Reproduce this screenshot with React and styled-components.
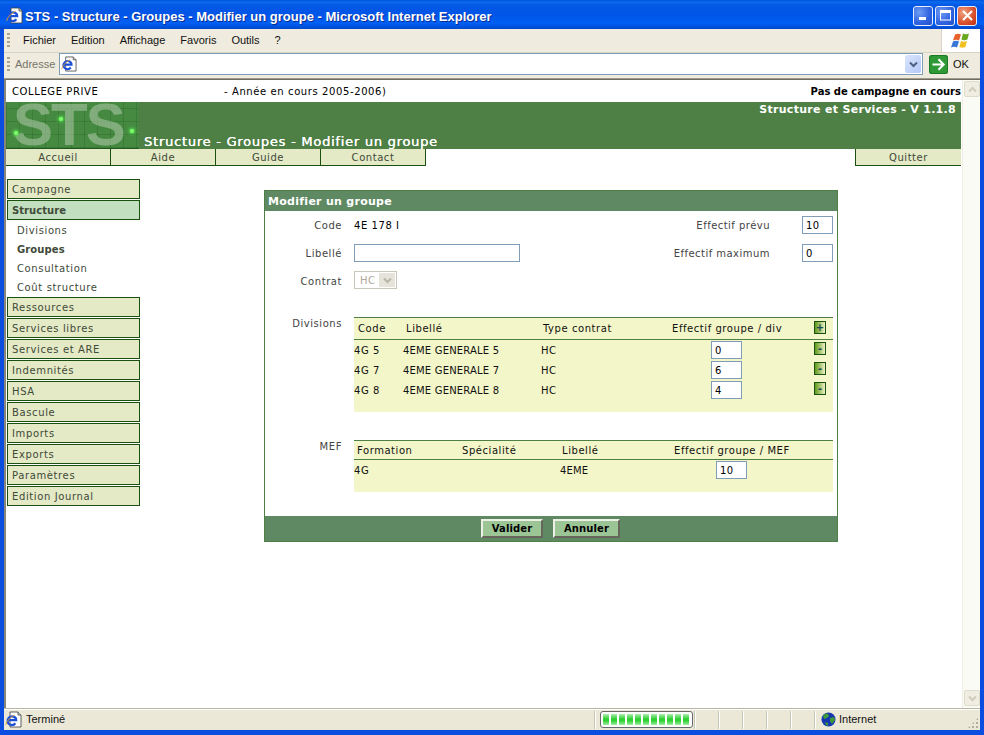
import React from "react";
import styled, { createGlobalStyle } from "styled-components";

const Global = createGlobalStyle`
  html, body { margin: 0; padding: 0; background: #0a4fe0; overflow: hidden; }
  * { box-sizing: border-box; }
`;
const page = `"DejaVu Sans", Verdana, sans-serif`;
const ui = `"Liberation Sans", "Noto Sans", sans-serif`;

const Win = styled.div`width: 984px; height: 735px; display: flex; flex-direction: column; background: #0a4ddf; overflow: hidden;`;
const TitleBar = styled.header`
  height: 29px; flex: none; display: flex; align-items: center; padding: 2px 7px 0 6px;
  background: linear-gradient(180deg, #0053d6 0, #0a6af0 2px, #0458e4 5px, #0055e8 50%, #0060f4 80%, #0048cc 100%);
`;
const TitleText = styled.span`
  flex: 1; margin: 1px 0 0 2px; font: bold 13px/1 ${ui}; letter-spacing: 0; color: #fff; text-shadow: 1px 1px 0 #0a2a90; white-space: nowrap;
`;
const Caption = styled.button`
  width: 20px; height: 20px; padding: 0; margin-left: 2px; border: 1px solid #e8eefc; border-radius: 3px; display: flex; align-items: center; justify-content: center;
  background: ${p => p.$close ? "radial-gradient(circle at 30% 30%, #f0a080, #d8502c 60%, #b83010)" : "radial-gradient(circle at 30% 30%, #6f9cf4, #2f62e0 60%, #2450c8)"};
`;
const Frame = styled.div`flex: 1; margin: 0 4px 5px; display: flex; flex-direction: column; min-height: 0; background: #ece9d8;`;
const MenuBar = styled.nav`
  height: 24px; flex: none; display: flex; align-items: center; background: #efebde; border-bottom: 1px solid #d8d4c4; padding: 0 0 1px 3px; position: relative;
`;
const Grip = styled.i`width: 3px; height: 15px; margin-right: 5px; flex: none; background: repeating-linear-gradient(180deg, #a8a490 0 2px, transparent 2px 4px);`;
const MenuItem = styled.span`font: 11px/1 ${ui}; color: #111; margin: 0 15px 0 ${p => p.$first ? 8 : 0}px; white-space: nowrap;`;
const FlagBox = styled.div`position: absolute; right: 0; top: 0; width: 39px; height: 23px; background: #fff; border-left: 1px solid #d8d4c4; display: flex; align-items: center; justify-content: center;`;
const AddressBar = styled.div`height: 26px; flex: none; display: flex; align-items: center; padding: 0 0 3px 3px; background: #efebde; border-bottom: 1px solid #a09c8c;`;
const AddrLabel = styled.span`font: 11px/1 ${ui}; color: #77756a; width: 44px; flex: none;`;
const AddrField = styled.div`width: 864px; height: 22px; flex: none; background: #fff; border: 1px solid #7f9db9; display: flex; align-items: center; justify-content: space-between; padding: 0 1px;`;
const Drop = styled.div`width: 16px; height: 18px; background: linear-gradient(135deg, #dbe6fd, #b4c8f6); border-radius: 2px; display: flex; align-items: center; justify-content: center;`;
const Go = styled.div`margin-left: 6px; display: flex; align-items: center; gap: 5px; font: 11px/1 ${ui}; color: #111;`;

const Viewport = styled.div`flex: 1; min-height: 0; display: flex; background: #fff; border-top: 1px solid #6e6c60; border-left: 2px solid #87857a;`;
const PageArea = styled.main`flex: 1; min-width: 0; font-family: ${page};`;
const Scrollbar = styled.div`width: 18px; flex: none; background: #fbfbf6; display: flex; flex-direction: column; justify-content: space-between; padding: 1px 0 2px; border-left: 1px solid #f1efe4;`;
const ScrollBtn = styled.div`width: 16px; height: 16px; margin-left: 1px; border: 1px solid #dedbcc; border-radius: 2px; background: #f0eee2; display: flex; align-items: center; justify-content: center;`;

const TopLine = styled.div`height: 22px; width: 955px; display: flex; align-items: center; font-size: 10px; letter-spacing: 0.6px; color: #000; padding-left: 6px;`;
const School = styled.span`width: 212px; flex: none;`;
const Status = styled.strong`margin-left: auto; letter-spacing: 0;`;
const Banner = styled.div`width: 955px; height: 47px; background: #4e7f44; display: flex; position: relative;`;
const Logo = styled.div`
  width: 133px; flex: none; position: relative; background-color: #468a41; border-bottom: 1px solid #1f5a22;
  background-image: repeating-linear-gradient(90deg, rgba(20,70,20,.2) 0 1px, transparent 1px 13px), repeating-linear-gradient(0deg, rgba(20,70,20,.2) 0 1px, transparent 1px 13px);
`;
const LogoText = styled.span`position: absolute; left: 7px; top: 1px; font: bold 60px/44px "Liberation Sans", sans-serif; letter-spacing: -2px; color: rgba(165,195,160,.62); white-space: nowrap;`;
const Spark = styled.i`position: absolute; width: 4px; height: 4px; border-radius: 50%; background: #7cff6a; box-shadow: 0 0 3px 1px #56e050; left: ${p => p.$x}px; top: ${p => p.$y}px;`;
const BannerTitle = styled.h1`margin: 0; align-self: flex-end; padding: 0 0 0 5px; font: 13px/15px ${page}; letter-spacing: 0.75px; color: #fff; white-space: nowrap; text-shadow: 0.3px 0 0 #fff;`;
const Version = styled.span`position: absolute; right: 5px; top: 1px; font: bold 11px/14px ${page}; letter-spacing: 0.3px; color: #fff;`;
const TabRow = styled.div`width: 955px; height: 17px; display: flex;`;
const Tab = styled.a`
  width: 105px; height: 17px; background: #e4e9c6; border-bottom: 1px solid #1a5010; ${p => p.$quit ? "border-left: 1px solid #1a5010; margin-left: auto; width: 106px;" : "border-right: 1px solid #1a5010;"}
  font-size: 10px; line-height: 17px; letter-spacing: 0.55px; color: #404a38; text-align: center;
`;
const Columns = styled.div`display: flex; align-items: flex-start;`;
const Side = styled.aside`width: 133px; margin: 13px 0 0 1px; flex: none; display: flex; flex-direction: column; gap: 1px;`;
const SideItem = styled.a`
  height: 20px; border: 1px solid #1a5010; background: ${p => p.$on ? "#c2e0c0" : "#e4e9c6"}; padding-left: 4px;
  font-size: 10px; line-height: 18px; padding-top: 1px; letter-spacing: 0.62px; color: #404a38; font-weight: ${p => p.$on ? 700 : 400}; ${p => p.$on && "letter-spacing: 0.05px;"}
`;
const SubList = styled.div`display: flex; flex-direction: column; padding-left: 10px; margin-bottom: -1px;`;
const SubItem = styled.a`
  height: 19px; font-size: 10px; line-height: 19px; letter-spacing: 0.62px; color: #404a38; font-weight: ${p => p.$on ? 700 : 400}; ${p => p.$on && "letter-spacing: 0.1px;"}
`;
const Panel = styled.section`width: 574px; margin: 24px 0 0 124px; flex: none; border: 1px solid #4e7f44; font-size: 10px; letter-spacing: 0.56px;`;
const PanelHead = styled.h2`margin: 0; height: 20px; padding-left: 3px; background: #5f8963; font: bold 11px/22px ${page}; letter-spacing: 0.28px; color: #fff;`;
const PanelBody = styled.div`padding: 5px 4px 24px 0; display: flex; flex-direction: column;`;
const Fields = styled.div`display: grid; grid-template-columns: 77px 166px 1fr 31px; column-gap: 12px; grid-auto-rows: 18px; row-gap: 10px; margin-bottom: 27px; align-items: center; color: #444;`;
const Label = styled.span`text-align: right; ${p => p.$far && "padding-right: 20px; letter-spacing: 0.47px;"} color: #444;`;
const Value = styled.span`color: #000;`;
const Box = styled.input`
  width: ${p => p.$w || 31}px; height: 18px; padding: 0 3px; border: 1px solid #7f9db9; background: #fff; font: 10px ${page}; letter-spacing: 0.5px; color: #000; outline: none; display: block; margin-left: ${p => p.$ml || 0}px;
`;
const Sel = styled.div`width: 43px; height: 18px; margin-top: -2px; border: 1px solid #c9c7ba; background: #fff; display: flex; align-items: center; justify-content: space-between; padding: 0 1px 0 5px; color: #aca899;`;
const SelBtn = styled.i`width: 16px; height: 14px; background: #e6e4da; display: flex; align-items: center; justify-content: center;`;
const Section = styled.div`display: grid; grid-template-columns: 77px 479px; column-gap: 12px; margin-bottom: ${p => p.$mb || 0}px;`;
const SecLabel = styled.span`text-align: right; color: #444; line-height: 12px; padding-top: 1px;`;
const Table = styled.div`background: #f3f6c8; border-top: 1px solid #4e7f44; color: #111; padding-bottom: ${p => p.$pb}px;`;
const Row = styled.div`
  display: grid; grid-template-columns: ${p => p.$cols}; align-items: center; height: ${p => p.$h}px;
`;
const HeadRow = styled(Row)`border-bottom: 1px solid #4e7f44;`;
const Cell = styled.span`padding-left: ${p => p.$pl || 0}px; white-space: nowrap; ${p => p.$tight && "letter-spacing: 0.18px;"}`;
const Spin = styled.span`
  align-self: start; margin-top: ${p => p.$mt}px;
  width: 12px; height: 13px; border: 1px solid #1a5010; background: linear-gradient(90deg, #5f9a1a, #eef0c8); display: flex; align-items: center; justify-content: center; font: bold 10px/1 ${page}; color: #1a4850; letter-spacing: 0;
`;
const PanelFoot = styled.footer`height: 25px; background: #5f8963; display: flex; justify-content: center; align-items: center; gap: 10px; padding-right: 1px;`;
const Btn = styled.button`
  width: ${p => p.$w}px; height: 19px; padding: 0; background: #9cc596; border: 2px solid; border-color: #eef0e8 #66665a #66665a #eef0e8; font: bold 10px ${page}; letter-spacing: 0.1px; color: #000;
`;
const StatusBar = styled.footer`height: 22px; flex: none; display: flex; align-items: center; background: #ebe8d8; border-top: 1px solid #b8b5a4; box-shadow: inset 0 1px 0 #fff; padding-left: 1px; position: relative; font: 11px/1 ${ui}; color: #111;`;
const StatText = styled.span`margin-left: 4px; width: 568px; flex: none;`;
const Sep = styled.i`width: 1px; height: 18px; background: #c8c5b4; box-shadow: 1px 0 0 #fff; margin-right: ${p => p.$mr ?? 23}px; flex: none;`;
const Progress = styled.div`width: 93px; height: 17px; margin: 0 1px 0 -1px; flex: none; border: 1px solid #686868; border-radius: 3px; background: #fff; padding: 2px; display: flex; gap: 2px;`;
const Bar = styled.i`width: 6px; flex: none; background: linear-gradient(180deg, #b0efb0, #2fd032 45%, #2fd032 60%, #a0eca0);`;
const ZoneText = styled.span`margin-left: 3px;`;
const Corner = styled.i`position: absolute; right: 1px; bottom: 1px; width: 12px; height: 12px; background: radial-gradient(circle, #b0ad9c 1px, transparent 1.4px) 0 0/4px 4px; clip-path: polygon(100% 0, 100% 100%, 0 100%);`;
const IconSvg = styled.svg`flex: none; margin-left: ${p => p.$ml || 0}px;`;

const IeIcon = ({ size = 17 }) => (
  <IconSvg width={size} height={size} viewBox="0 0 17 17">
    <path d="M5 1h8l3 3v12H5z" fill="#fff" stroke="#3a3a3a" strokeWidth="0.8" />
    <path d="M13 1v3h3" fill="#d8d8d8" stroke="#3a3a3a" strokeWidth="0.8" />
    <path d="M2.2 9.2h9c0-3.4-4.6-5.2-7.2-2.6-2.2 2.2-1.8 6 1 7 2 .8 4.2.1 5.4-1.4" fill="none" stroke="#1c50d8" strokeWidth="2.2" />
    <path d="M1 14c-.8-2 3.4-7.2 8.6-10" fill="none" stroke="#e0a030" strokeWidth="0.9" />
  </IconSvg>
);
const Chevron = ({ c = "#4d6185", s = 9 }) => (
  <svg width={s} height={s} viewBox="0 0 9 9"><path d="M1 2.5l3.5 3.5L8 2.5" fill="none" stroke={c} strokeWidth="2" /></svg>
);
const UpChevron = () => (
  <svg width="9" height="9" viewBox="0 0 9 9"><path d="M1 6.5L4.5 3 8 6.5" fill="none" stroke="#cfccbc" strokeWidth="2" /></svg>
);
const Flag = () => (
  <svg width="21" height="20" viewBox="0 0 21 20">
    <path d="M4 3.5c2-1 4-1 6 0l-2 6c-2-1-4-1-6 0z" fill="#e8622c" />
    <path d="M12 2.5c2 1 4 1 6 0l-1.6 6c-2 1-4 1-6 0z" fill="#6aa820" />
    <path d="M2 10.5c2-1 4-1 6 0l-2 6c-2-1-4-1-6 0z" fill="#3a78d8" />
    <path d="M10 10c2 1 4 1 6 0l-1.6 6c-2 1-4 1-6 0z" fill="#f0c020" />
  </svg>
);
const GoIcon = () => (
  <svg width="19" height="19" viewBox="0 0 19 19">
    <rect width="19" height="19" rx="2.5" fill="#2f9a35" />
    <rect x="0.5" y="0.5" width="18" height="18" rx="2.5" fill="none" stroke="#1d7a24" />
    <path d="M3.5 9.5h11M9.5 4.2l5.2 5.3-5.2 5.3" fill="none" stroke="#fff" strokeWidth="2" />
  </svg>
);
const Globe = () => (
  <IconSvg $ml={6} width="15" height="15" viewBox="0 0 15 15">
    <circle cx="7.5" cy="7.5" r="7" fill="#1636b0" />
    <path d="M4 2c2-1 4 0 4 2L6 6 3 7 2 4zM9 6l4-1 1 3-3 4-2-3zM4 10l3 1 0 3-2-1z" fill="#3f9a3a" />
  </IconSvg>
);

const menus = ["Fichier", "Edition", "Affichage", "Favoris", "Outils", "?"];
const tabs = ["Accueil", "Aide", "Guide", "Contact"];
const lower = ["Ressources", "Services libres", "Services et ARE", "Indemnités", "HSA", "Bascule", "Imports", "Exports", "Paramètres", "Edition Journal"];
const divCols = "49px 138px 129px 144px 19px";
const mefCols = "106px 100px 110px 163px";
const divisions = [["4G 5", "4EME GENERALE 5", "0"], ["4G 7", "4EME GENERALE 7", "6"], ["4G 8", "4EME GENERALE 8", "4"]];

export default function App() {
  return (
    <Win>
      <Global />
      <TitleBar>
        <IeIcon />
        <TitleText>STS - Structure - Groupes - Modifier un groupe - Microsoft Internet Explorer</TitleText>
        <Caption aria-label="Réduire"><svg width="11" height="11" viewBox="0 0 11 11"><rect x="1" y="7" width="7" height="3" fill="#fff" /></svg></Caption>
        <Caption aria-label="Agrandir"><svg width="13" height="13" viewBox="0 0 13 13"><rect x="1.5" y="2" width="10" height="9" fill="none" stroke="#fff" /><rect x="1" y="1" width="11" height="3" fill="#fff" /></svg></Caption>
        <Caption $close aria-label="Fermer"><svg width="13" height="13" viewBox="0 0 13 13"><path d="M2 2l9 9M11 2l-9 9" stroke="#fff" strokeWidth="2" /></svg></Caption>
      </TitleBar>
      <Frame>
        <MenuBar>
          <Grip />
          {menus.map((m, i) => <MenuItem key={m} $first={i === 0}>{m}</MenuItem>)}
          <FlagBox><Flag /></FlagBox>
        </MenuBar>
        <AddressBar>
          <Grip />
          <AddrLabel>Adresse</AddrLabel>
          <AddrField><IeIcon size={16} /><Drop><Chevron /></Drop></AddrField>
          <Go><GoIcon />OK</Go>
        </AddressBar>
        <Viewport>
          <PageArea>
            <TopLine>
              <School>COLLEGE PRIVE</School>
              <span>- Année en cours 2005-2006)</span>
              <Status>Pas de campagne en cours</Status>
            </TopLine>
            <Banner>
              <Logo>
                <LogoText>STS</LogoText>
                <Spark $x={8} $y={29} /><Spark $x={53} $y={15} /><Spark $x={124} $y={27} />
              </Logo>
              <BannerTitle>Structure - Groupes - Modifier un groupe</BannerTitle>
              <Version>Structure et Services - V 1.1.8</Version>
            </Banner>
            <TabRow>
              {tabs.map(t => <Tab key={t}>{t}</Tab>)}
              <Tab $quit>Quitter</Tab>
            </TabRow>
            <Columns>
              <Side>
                <SideItem>Campagne</SideItem>
                <SideItem $on>Structure</SideItem>
                <SubList>
                  <SubItem>Divisions</SubItem>
                  <SubItem $on>Groupes</SubItem>
                  <SubItem>Consultation</SubItem>
                  <SubItem>Coût structure</SubItem>
                </SubList>
                {lower.map(l => <SideItem key={l}>{l}</SideItem>)}
              </Side>
              <Panel>
                <PanelHead>Modifier un groupe</PanelHead>
                <PanelBody>
                  <Fields>
                    <Label>Code</Label><Value>4E 178 I</Value><Label $far>Effectif prévu</Label><Box defaultValue="10" />
                    <Label>Libellé</Label><Box $w={166} defaultValue="" /><Label $far>Effectif maximum</Label><Box defaultValue="0" />
                    <Label>Contrat</Label><Sel>HC<SelBtn><Chevron c="#b8b6a8" /></SelBtn></Sel>
                  </Fields>
                  <Section $mb={28}>
                    <SecLabel>Divisions</SecLabel>
                    <Table $pb={12}>
                      <HeadRow $cols={divCols} $h={22}>
                        <Cell $pl={4}>Code</Cell><Cell $pl={3}>Libellé</Cell><Cell $pl={2}>Type contrat</Cell><Cell $pl={2}>Effectif groupe / div</Cell><Spin $mt={3}>+</Spin>
                      </HeadRow>
                      {divisions.map(([c, l, v]) => (
                        <Row key={c} $cols={divCols} $h={20}>
                          <Cell>{c}</Cell><Cell $tight>{l}</Cell><Cell>HC</Cell><Box $ml={41} defaultValue={v} /><Spin $mt={2}>-</Spin>
                        </Row>
                      ))}
                    </Table>
                  </Section>
                  <Section>
                    <SecLabel>MEF</SecLabel>
                    <Table $pb={12}>
                      <HeadRow $cols={mefCols} $h={19}>
                        <Cell $pl={3}>Formation</Cell><Cell $pl={2}>Spécialité</Cell><Cell $pl={2}>Libellé</Cell><Cell $pl={4}>Effectif groupe / MEF</Cell>
                      </HeadRow>
                      <Row $cols={mefCols} $h={20}>
                        <Cell>4G</Cell><Cell /><Cell $tight>4EME</Cell><Box $ml={46} defaultValue="10" />
                      </Row>
                    </Table>
                  </Section>
                </PanelBody>
                <PanelFoot>
                  <Btn $w={62}>Valider</Btn>
                  <Btn $w={67}>Annuler</Btn>
                </PanelFoot>
              </Panel>
            </Columns>
          </PageArea>
          <Scrollbar>
            <ScrollBtn><UpChevron /></ScrollBtn>
            <ScrollBtn><Chevron c="#cfccbc" /></ScrollBtn>
          </Scrollbar>
        </Viewport>
        <StatusBar>
          <IeIcon />
          <StatText>Terminé</StatText>
          <Sep $mr={6} />
          <Progress>{Array.from({ length: 11 }, (_, i) => <Bar key={i} />)}</Progress>
          <Sep />
          <Sep />
          <Sep />
          <Sep />
          <Sep />
          <Sep $mr={0} />
          <Globe />
          <ZoneText>Internet</ZoneText>
          <Corner />
        </StatusBar>
      </Frame>
    </Win>
  );
}
